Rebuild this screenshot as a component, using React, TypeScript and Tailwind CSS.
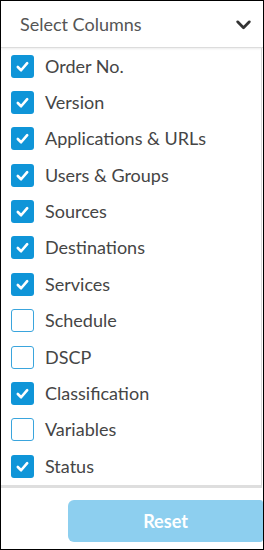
import { useState } from 'react';

const initialColumns = [
  { label: 'Order No.', checked: true },
  { label: 'Version', checked: true },
  { label: 'Applications & URLs', checked: true },
  { label: 'Users & Groups', checked: true },
  { label: 'Sources', checked: true },
  { label: 'Destinations', checked: true },
  { label: 'Services', checked: true },
  { label: 'Schedule', checked: false },
  { label: 'DSCP', checked: false },
  { label: 'Classification', checked: true },
  { label: 'Variables', checked: false },
  { label: 'Status', checked: true },
];

export default function App() {
  const [columns, setColumns] = useState(initialColumns);

  const toggle = (i: number) => {
    setColumns(columns.map((c, idx) => (idx === i ? { ...c, checked: !c.checked } : c)));
  };

  return (
    <div className="w-[264px] h-[550px] border border-black bg-white flex flex-col font-['Lato',sans-serif]">
      <div className="h-[47px] shrink-0 flex items-center justify-between pl-[19px] pr-[11px] border-b border-[#dcdcdc] shadow-[0_1px_2px_rgba(0,0,0,0.08)]">
        <span className="text-[18px] text-[#555]">Select Columns</span>
        <svg className="w-[17px] h-[17px] text-[#333]" viewBox="0 0 16 16" fill="none" stroke="currentColor" strokeWidth={2.6} strokeLinecap="round" strokeLinejoin="round">
          <path d="M2.5 5.5 8 11l5.5-5.5" />
        </svg>
      </div>

      <ul className="border-r border-[#d6d6d6] border-b-[3px] border-b-[#dedede] mr-[1px] pb-[1px]">
        {columns.map((c, i) => (
          <li key={c.label} className="h-[36.36px] flex items-center pl-[10px] cursor-pointer" onClick={() => toggle(i)}>
            {c.checked ? (
              <span className="w-[23px] h-[23px] rounded-[3px] bg-[#0f95d8] flex items-center justify-center">
                <svg className="w-[15px] h-[15px]" viewBox="0 0 16 16" fill="none" stroke="white" strokeWidth={2.8} strokeLinecap="round" strokeLinejoin="round">
                  <path d="M3 8.5 6.5 12 13 4.5" />
                </svg>
              </span>
            ) : (
              <span className="w-[23px] h-[23px] rounded-[3px] border border-[#3aa5dd] bg-white" />
            )}
            <span className="ml-[11px] text-[18px] text-[#454545]">{c.label}</span>
          </li>
        ))}
      </ul>

      <div className="flex justify-end pt-[12px]">
        <button className="w-[195px] h-[42px] rounded-l-[6px] rounded-r-[3px] bg-[#8dcfef] text-white text-[18px] font-bold">
          Reset
        </button>
      </div>
    </div>
  );
}
